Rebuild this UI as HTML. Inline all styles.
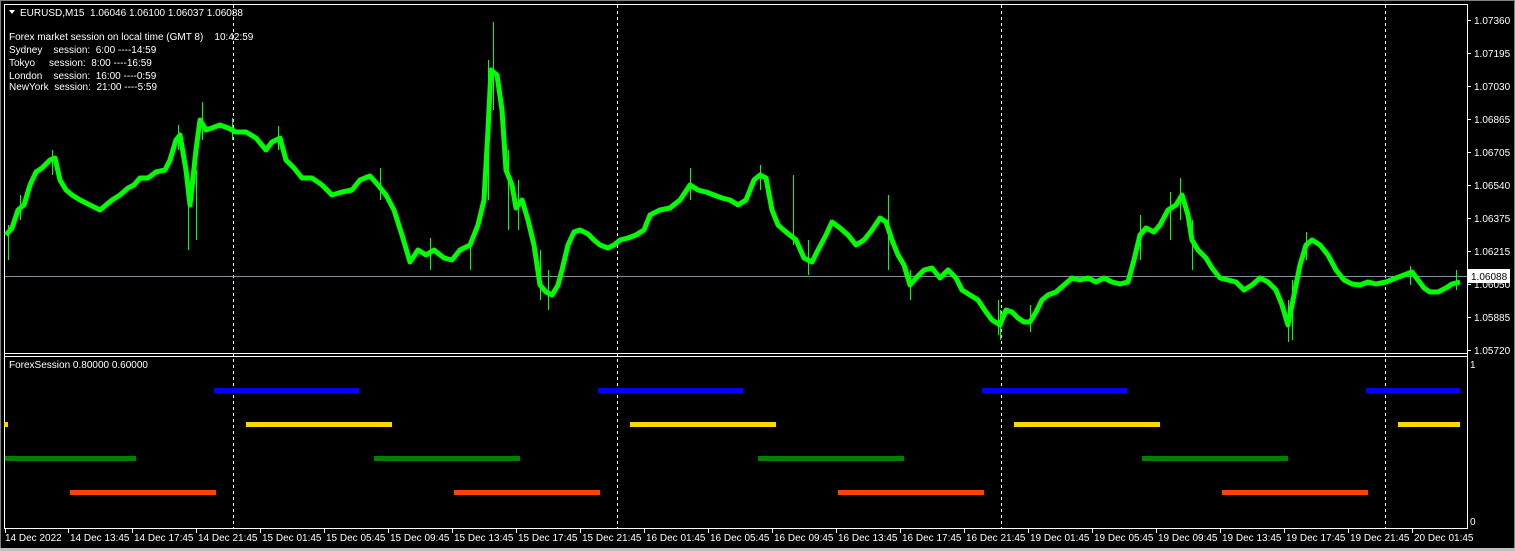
<!DOCTYPE html>
<html><head><meta charset="utf-8"><style>
html,body{margin:0;padding:0;background:#000;width:1515px;height:551px;overflow:hidden}
svg{display:block}
text{font-family:"Liberation Sans",sans-serif;font-size:10px;fill:#fff;white-space:pre}
</style></head><body>
<svg width="1515" height="551" xmlns="http://www.w3.org/2000/svg">
<rect width="1515" height="551" fill="#000"/>
<rect x="0.5" y="0.5" width="1514" height="550" fill="none" stroke="#808080"/>
<rect x="0" y="548" width="1515" height="3" fill="#c0c0c0"/>
<line x1="4.5" y1="4" x2="4.5" y2="528" stroke="#fff"/>
<line x1="4" y1="4.5" x2="1467" y2="4.5" stroke="#fff"/>
<line x1="1467.5" y1="4" x2="1467.5" y2="529" stroke="#fff"/>
<line x1="4" y1="353.5" x2="1467" y2="353.5" stroke="#fff"/>
<line x1="4" y1="356.5" x2="1467" y2="356.5" stroke="#fff"/>
<line x1="4" y1="528.5" x2="1467" y2="528.5" stroke="#fff"/>
<g stroke="#fff" stroke-dasharray="3,3">
<line x1="233.5" y1="5" x2="233.5" y2="528"/>
<line x1="617.5" y1="5" x2="617.5" y2="528"/>
<line x1="1001.5" y1="5" x2="1001.5" y2="528"/>
<line x1="1385.5" y1="5" x2="1385.5" y2="528"/>
</g>
<line x1="5" y1="276.5" x2="1467" y2="276.5" stroke="#8090a0"/>
<polyline fill="none" stroke="#00ff00" stroke-width="5" stroke-linejoin="round" points="6,235 12,228 18,210 24,205 30,185 36,172 42,168 50,160 55,158 60,180 66,190 72,195 80,200 90,205 100,210 106,205 112,200 120,195 128,188 134,185 140,178 148,178 156,172 165,170 170,160 176,140 180,135 186,170 190,205 196,150 200,120 206,130 212,128 220,125 228,128 236,132 246,132 256,138 266,150 272,142 280,138 286,160 294,168 302,178 312,178 322,185 332,195 342,192 352,190 360,180 370,176 378,185 386,195 394,210 402,235 410,262 418,250 426,255 434,250 444,258 452,260 460,250 470,245 478,225 484,200 488,130 491,70 497,75 502,110 506,170 512,185 516,208 522,200 528,220 534,245 540,285 546,292 552,295 558,285 562,270 568,245 574,232 580,230 588,234 594,240 600,245 608,248 614,245 620,240 628,238 636,235 644,230 650,215 660,210 670,208 680,200 690,185 698,190 706,192 714,195 722,198 730,200 738,205 746,200 754,180 760,175 766,178 772,210 778,225 786,232 796,240 804,258 812,262 818,250 826,235 832,222 840,228 848,235 856,245 864,240 872,230 880,218 886,222 892,240 898,255 904,265 910,285 916,278 924,270 932,268 940,278 948,270 956,278 962,290 970,295 978,300 986,312 992,320 1000,325 1006,310 1012,312 1018,318 1024,322 1030,322 1036,312 1042,300 1048,295 1056,292 1064,285 1072,278 1080,280 1088,278 1096,282 1104,278 1112,282 1120,284 1128,282 1134,260 1140,235 1146,228 1154,232 1160,225 1168,210 1176,205 1182,195 1188,215 1192,240 1198,250 1206,258 1212,268 1220,278 1228,280 1236,282 1244,290 1252,285 1260,278 1268,282 1276,290 1282,305 1288,325 1294,295 1300,265 1306,245 1312,240 1320,245 1328,255 1336,270 1344,280 1352,284 1360,285 1368,282 1376,284 1386,282 1396,278 1404,275 1412,272 1418,280 1424,288 1430,292 1438,292 1446,288 1452,284 1460,282"/>
<path transform="translate(0.5,0)" fill="none" stroke="#00ff00" stroke-width="1" d="M8 225V260 M20 195V220 M52 150V175 M178 125V150 M188 180V250 M196 170V240 M202 102V140 M232 118V140 M278 126V150 M493 22V110 M488 60V200 M508 150V230 M518 180V230 M540 250V300 M548 270V310 M690 168V200 M760 165V190 M793 175V245 M808 240V275 M888 195V270 M910 270V300 M998 300V335 M1000 310V340 M1030 305V332 M1140 215V260 M1180 178V220 M1192 220V270 M1288 300V342 M1292 280V340 M1306 232V260 M1410 266V285 M1456 270V290 M380 168V200 M430 238V270 M470 242V270 M1170 192V240"/>
<g>
<rect x="214" y="388" width="145" height="5" fill="#0000ff"/>
<rect x="598" y="388" width="145" height="5" fill="#0000ff"/>
<rect x="982" y="388" width="145" height="5" fill="#0000ff"/>
<rect x="1366" y="388" width="94" height="5" fill="#0000ff"/>
<rect x="4" y="422" width="4" height="5" fill="#ffd700"/>
<rect x="246" y="422" width="146" height="5" fill="#ffd700"/>
<rect x="630" y="422" width="146" height="5" fill="#ffd700"/>
<rect x="1014" y="422" width="146" height="5" fill="#ffd700"/>
<rect x="1398" y="422" width="62" height="5" fill="#ffd700"/>
<rect x="5" y="456" width="131" height="5" fill="#008000"/>
<rect x="374" y="456" width="146" height="5" fill="#008000"/>
<rect x="758" y="456" width="146" height="5" fill="#008000"/>
<rect x="1142" y="456" width="146" height="5" fill="#008000"/>
<rect x="70" y="490" width="146" height="5" fill="#ff4500"/>
<rect x="454" y="490" width="146" height="5" fill="#ff4500"/>
<rect x="838" y="490" width="146" height="5" fill="#ff4500"/>
<rect x="1222" y="490" width="146" height="5" fill="#ff4500"/>
</g>
<path d="M9 10 L15 10 L12 14 Z" fill="#fff"/>
<text x="20" y="16">EURUSD,M15  1.06046 1.06100 1.06037 1.06088</text>
<text x="9" y="40">Forex market session on local time (GMT 8)    10:42:59</text>
<text x="9" y="53">Sydney    session:  6:00 ----14:59</text>
<text x="9" y="66">Tokyo     session:  8:00 ----16:59</text>
<text x="9" y="79">London    session:  16:00 ----0:59</text>
<text x="9" y="90">NewYork  session:  21:00 ----5:59</text>
<text x="9" y="368">ForexSession 0.80000 0.60000</text>
<g stroke="#fff">
<line x1="1467" y1="20.5" x2="1471" y2="20.5"/><line x1="1467" y1="53.5" x2="1471" y2="53.5"/><line x1="1467" y1="86.5" x2="1471" y2="86.5"/><line x1="1467" y1="119.5" x2="1471" y2="119.5"/><line x1="1467" y1="152.5" x2="1471" y2="152.5"/><line x1="1467" y1="185.5" x2="1471" y2="185.5"/><line x1="1467" y1="218.5" x2="1471" y2="218.5"/><line x1="1467" y1="251.5" x2="1471" y2="251.5"/><line x1="1467" y1="284.5" x2="1471" y2="284.5"/><line x1="1467" y1="317.5" x2="1471" y2="317.5"/><line x1="1467" y1="350.5" x2="1471" y2="350.5"/>
</g>
<text x="1474" y="24">1.07360</text><text x="1474" y="57">1.07195</text><text x="1474" y="90">1.07030</text><text x="1474" y="123">1.06865</text><text x="1474" y="156">1.06705</text><text x="1474" y="189">1.06540</text><text x="1474" y="222">1.06375</text><text x="1474" y="255">1.06215</text><text x="1474" y="288">1.06050</text><text x="1474" y="321">1.05885</text><text x="1474" y="354">1.05720</text>
<g stroke="#fff">
<line x1="5.5" y1="528" x2="5.5" y2="533"/><line x1="68.5" y1="528" x2="68.5" y2="533"/><line x1="132.5" y1="528" x2="132.5" y2="533"/><line x1="196.5" y1="528" x2="196.5" y2="533"/><line x1="260.5" y1="528" x2="260.5" y2="533"/><line x1="324.5" y1="528" x2="324.5" y2="533"/><line x1="388.5" y1="528" x2="388.5" y2="533"/><line x1="452.5" y1="528" x2="452.5" y2="533"/><line x1="516.5" y1="528" x2="516.5" y2="533"/><line x1="580.5" y1="528" x2="580.5" y2="533"/><line x1="644.5" y1="528" x2="644.5" y2="533"/><line x1="708.5" y1="528" x2="708.5" y2="533"/><line x1="772.5" y1="528" x2="772.5" y2="533"/><line x1="836.5" y1="528" x2="836.5" y2="533"/><line x1="900.5" y1="528" x2="900.5" y2="533"/><line x1="964.5" y1="528" x2="964.5" y2="533"/><line x1="1028.5" y1="528" x2="1028.5" y2="533"/><line x1="1092.5" y1="528" x2="1092.5" y2="533"/><line x1="1156.5" y1="528" x2="1156.5" y2="533"/><line x1="1220.5" y1="528" x2="1220.5" y2="533"/><line x1="1284.5" y1="528" x2="1284.5" y2="533"/><line x1="1348.5" y1="528" x2="1348.5" y2="533"/><line x1="1412.5" y1="528" x2="1412.5" y2="533"/>
</g>
<text x="5" y="541">14 Dec 2022</text><text x="70" y="541">14 Dec 13:45</text><text x="134" y="541">14 Dec 17:45</text><text x="198" y="541">14 Dec 21:45</text><text x="262" y="541">15 Dec 01:45</text><text x="326" y="541">15 Dec 05:45</text><text x="390" y="541">15 Dec 09:45</text><text x="454" y="541">15 Dec 13:45</text><text x="518" y="541">15 Dec 17:45</text><text x="582" y="541">15 Dec 21:45</text><text x="646" y="541">16 Dec 01:45</text><text x="710" y="541">16 Dec 05:45</text><text x="774" y="541">16 Dec 09:45</text><text x="838" y="541">16 Dec 13:45</text><text x="902" y="541">16 Dec 17:45</text><text x="966" y="541">16 Dec 21:45</text><text x="1030" y="541">19 Dec 01:45</text><text x="1094" y="541">19 Dec 05:45</text><text x="1158" y="541">19 Dec 09:45</text><text x="1222" y="541">19 Dec 13:45</text><text x="1286" y="541">19 Dec 17:45</text><text x="1350" y="541">19 Dec 21:45</text><text x="1414" y="541">20 Dec 01:45</text>
<rect x="1468" y="269" width="42" height="14" fill="#fff"/>
<text x="1471" y="280" style="fill:#000">1.06088</text>
<text x="1470" y="368">1</text>
<text x="1470" y="525">0</text>
</svg>
</body></html>
